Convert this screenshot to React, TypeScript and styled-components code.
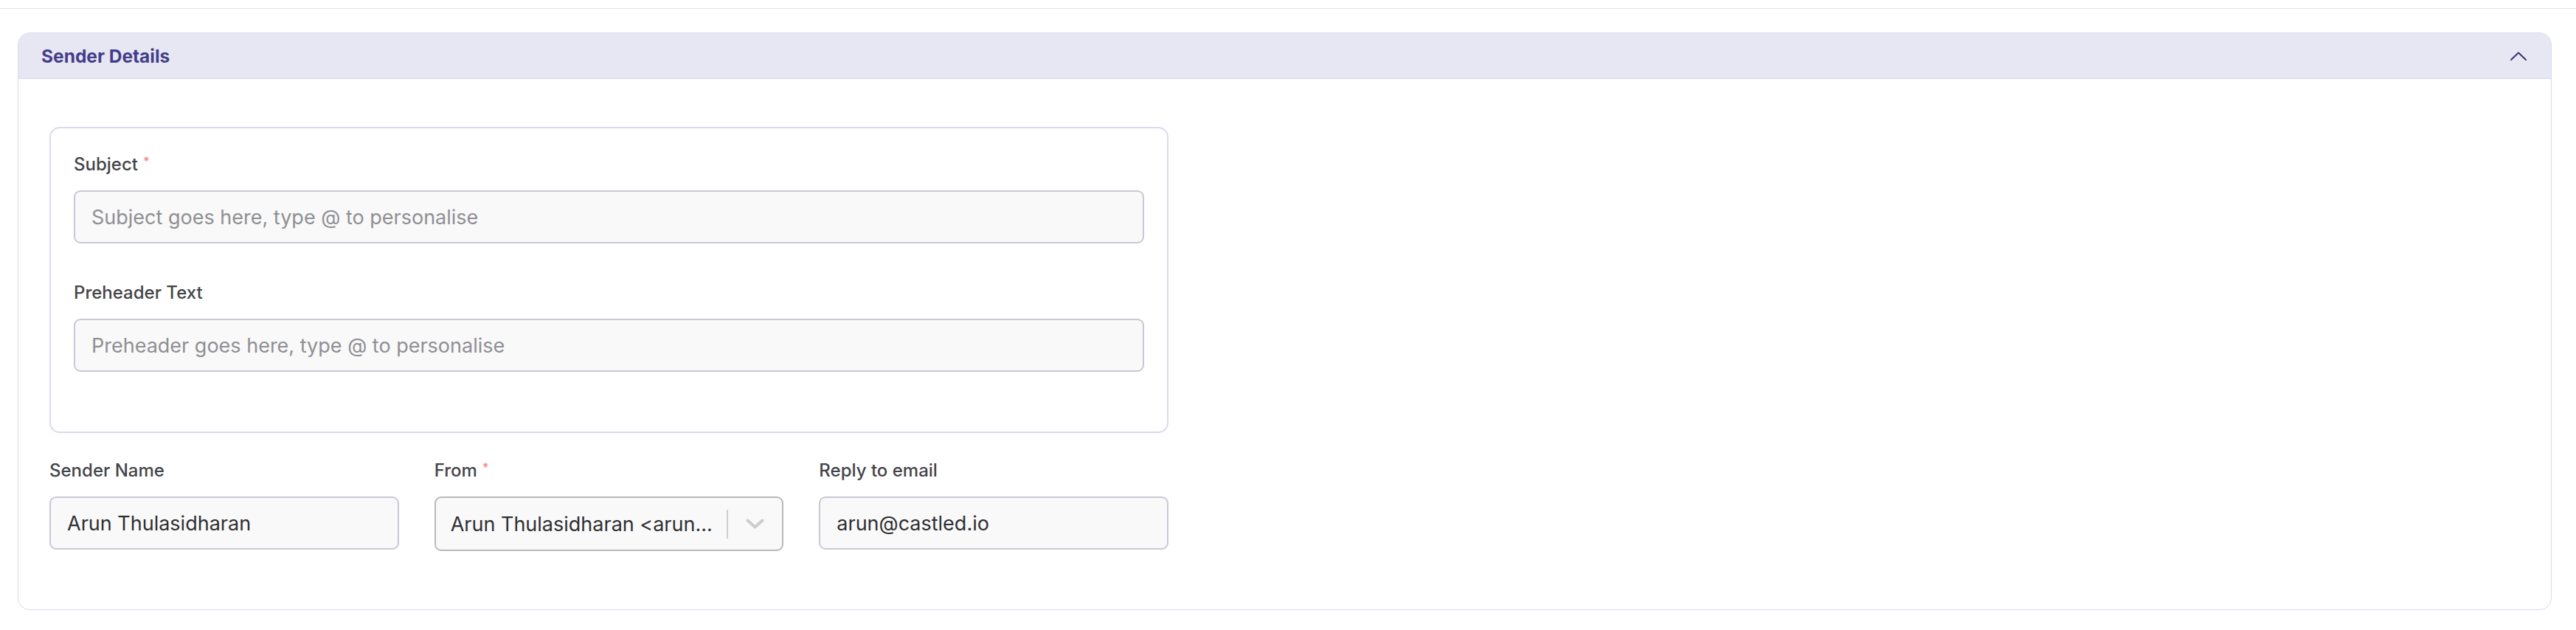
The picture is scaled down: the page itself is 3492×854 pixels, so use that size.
import React from 'react';
import styled, { createGlobalStyle } from 'styled-components';

const GlobalStyle = createGlobalStyle`
  html, body { margin: 0; padding: 0; background: #ffffff; }
  body { font-family: Inter, "Noto Sans", sans-serif; -webkit-font-smoothing: antialiased; }
  * { box-sizing: border-box; }
`;

const Page = styled.div`
  width: 100%;
`;

const TopRule = styled.div`
  height: 12px;
  border-bottom: 1px solid #e3e3ee;
`;

const Card = styled.section`
  margin: 32px 33px 0 24px;
  border: 1px solid #d9d9ef;
  border-radius: 16px;
  overflow: hidden;
  background: #ffffff;
`;

const CardHeader = styled.header`
  height: 62px;
  display: flex;
  align-items: center;
  justify-content: space-between;
  padding: 0 33px 0 31px;
  background: #e7e7f4;
  border-bottom: 1px solid #d6d6ee;
`;

const CardTitle = styled.h2`
  margin: 0;
  font-size: 24.5px;
  font-weight: 700;
  color: #433d8a;
`;

const ToggleButton = styled.button`
  border: 0;
  background: transparent;
  padding: 0;
  display: flex;
  align-items: center;
  color: #38336f;
  cursor: pointer;
`;

const CardBody = styled.div`
  padding: 65px 42px 79px 42px;
`;

const FormColumn = styled.div`
  width: 1517px;
`;

const MessageBox = styled.div`
  border: 2px solid #dadaf0;
  border-radius: 14px;
  padding: 35px 31px 28px 31px;
`;

const Field = styled.div<{ $spaced?: boolean }>`
  display: flex;
  flex-direction: column;
  min-width: 0;
  margin-bottom: ${(p) => (p.$spaced ? '53px' : '0')};
`;

const Label = styled.label`
  display: block;
  font-size: 24px;
  line-height: 28px;
  font-weight: 500;
  color: #444448;
  margin-bottom: 21px;
`;

const Required = styled.span`
  color: #f08c8c;
  font-size: 17px;
  margin-left: 7px;
  vertical-align: top;
  line-height: 20px;
`;

const TextInput = styled.input`
  width: 100%;
  height: 72px;
  border: 2px solid #c7c9d6;
  border-radius: 9px;
  background: #f9f9f9;
  padding: 0 22px;
  font-family: Inter, "Noto Sans", sans-serif;
  font-size: 27px;
  color: #2f2f33;
  outline: none;
  &::placeholder {
    color: #8f8f93;
  }
`;

const BottomRow = styled.div`
  display: grid;
  grid-template-columns: repeat(3, minmax(0, 1fr));
  column-gap: 48px;
  margin-top: 37px;
`;

const SelectControl = styled.div`
  height: 74px;
  display: flex;
  align-items: center;
  border: 2px solid #b9b9bb;
  border-radius: 9px;
  background: #f9f9f9;
  cursor: default;
`;

const SelectValue = styled.div`
  flex: 1;
  min-width: 0;
  padding: 0 14px 0 20px;
  font-size: 27px;
  color: #2f2f33;
  white-space: nowrap;
  overflow: hidden;
  text-overflow: ellipsis;
`;

const Separator = styled.span`
  width: 2px;
  height: 39px;
  background: #cfcfcf;
  flex-shrink: 0;
`;

const Indicator = styled.span`
  display: flex;
  align-items: center;
  padding: 0 24px 0 24px;
  color: #cccccc;
`;

const ChevronUp = () => (
  <svg width="22" height="12" viewBox="0 0 22 12" fill="none">
    <polyline points="1,11 11,1.5 21,11" stroke="currentColor" strokeWidth="2" strokeLinecap="round" strokeLinejoin="round" />
  </svg>
);

const ChevronDown = () => (
  <svg width="25" height="14" viewBox="0 0 25 14" fill="none">
    <polyline points="2.5,2.5 12.5,11.5 22.5,2.5" stroke="currentColor" strokeWidth="4" strokeLinecap="round" strokeLinejoin="round" />
  </svg>
);

export default function App() {
  return (
    <Page>
      <GlobalStyle />
      <TopRule />
      <Card>
        <CardHeader>
          <CardTitle>Sender Details</CardTitle>
          <ToggleButton aria-label="Collapse">
            <ChevronUp />
          </ToggleButton>
        </CardHeader>
        <CardBody>
          <FormColumn>
            <MessageBox>
              <Field $spaced>
                <Label>
                  Subject<Required>*</Required>
                </Label>
                <TextInput placeholder="Subject goes here, type @ to personalise" />
              </Field>
              <Field $spaced>
                <Label>Preheader Text</Label>
                <TextInput placeholder="Preheader goes here, type @ to personalise" />
              </Field>
            </MessageBox>
            <BottomRow>
              <Field>
                <Label>Sender Name</Label>
                <TextInput defaultValue="Arun Thulasidharan" />
              </Field>
              <Field>
                <Label>
                  From<Required>*</Required>
                </Label>
                <SelectControl>
                  <SelectValue>Arun Thulasidharan &lt;arun...</SelectValue>
                  <Separator />
                  <Indicator>
                    <ChevronDown />
                  </Indicator>
                </SelectControl>
              </Field>
              <Field>
                <Label>Reply to email</Label>
                <TextInput defaultValue="arun@castled.io" />
              </Field>
            </BottomRow>
          </FormColumn>
        </CardBody>
      </Card>
    </Page>
  );
}
